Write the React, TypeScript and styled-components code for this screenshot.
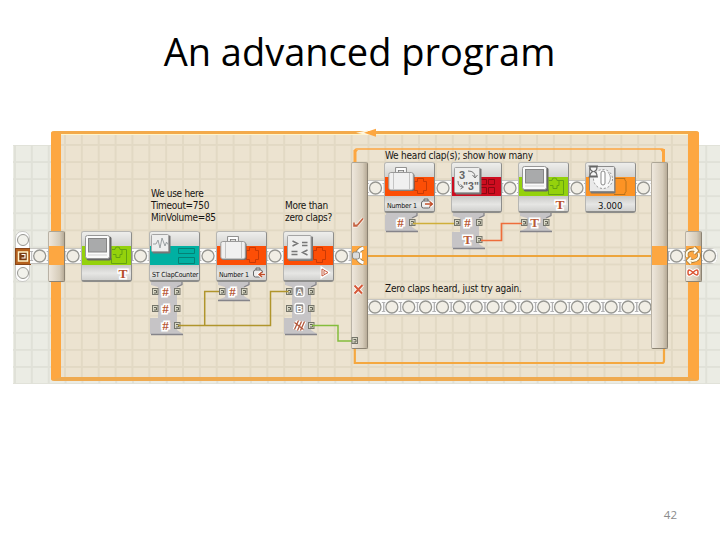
import type { ReactNode } from "react";
import styled, { createGlobalStyle } from "styled-components";

const PITCH = 16.87;
const ORANGE = "#fda741";

const GREEN = "#94d20c";
const RED_ORANGE = "#fc4e06";

type GlyphName = "#" | "T" | "A" | "B" | "%";

interface HubRow {
  glyph: GlyphName;
  input?: boolean;
}

function Beam({ width, circles = [width / 2], end }: { width: number; circles?: number[]; end?: boolean }) {
  return (
    <BeamStrip $width={width} $end={end}>
      <svg width={width} height="16">
        {circles.map((cx) => (
          <g key={cx} fill="none">
            <path
              d={`M${cx - 10} 3.5h3.4M${cx - 10} 12.5h3.4M${cx - 8} 3v9.5M${cx + 7} 3.5h3M${cx + 7} 12.5h3M${cx + 8.6} 3v9.5`}
              stroke="#b2b2b4"
            />
            <circle cx={cx} cy="8" r="6" fill="#f1eee5" stroke="#969691" strokeWidth="1.3" />
          </g>
        ))}
      </svg>
    </BeamStrip>
  );
}

function Glyph({ name, x, y }: { name: GlyphName; x: number; y: number }) {
  if (name === "A" || name === "B") {
    return (
      <g>
        <rect x={x - 4.5} y={y - 5} width="9" height="10" rx="2" fill="#8d8b8b" stroke="#fff" strokeWidth="1.4" />
        <GlyphText x={x} y={y + 3.2} $size={9} $color="#fff" $outline="none" $sans>
          {name}
        </GlyphText>
      </g>
    );
  }
  if (name === "%") {
    const hatch = `M${x - 5} ${y + 4}l4-9M${x - 2} ${y + 5}l4-9M${x + 1} ${y + 5}l4-9M${x - 5} ${y - 3}l9 7`;
    return (
      <g fill="none">
        <path d={hatch} stroke="#fff" strokeWidth="3.6" />
        <path d={hatch} stroke="#b3573b" strokeWidth="1.3" />
      </g>
    );
  }
  return (
    <GlyphText x={x} y={y + 4.3} $size={13} $color="#b85a38" $outline="#fff">
      {name}
    </GlyphText>
  );
}

function Port({ x, y }: { x: number; y: number }) {
  return (
    <g>
      <rect x={x} y={y - 3} width="5.5" height="6" fill="#d9d8c6" stroke="#76766b" />
      <path d={`M${x + 1.5} ${y - 1}h2.5v2.5h-2.5`} fill="none" stroke="#626257" />
    </g>
  );
}

function Hub({ rows }: { rows: HubRow[] }) {
  const height = rows.length * 17 + 3;
  const closed = !rows[rows.length - 1].input;
  const left = closed ? `H0V${height - 18}H8` : `L8 ${height - 5}`;
  return (
    <HubSvg width="36" height={height}>
      <path d={`M1 0H32V3L27 5V${height - 6}L33 ${height - 2}H1${left}V5L1 3Z`} fill="#c6c4c6" />
      <path d={`M1 ${height - 1.5}H33M32 0V2.5L27 5`} fill="none" stroke="#85848a" strokeWidth="1.3" />
      {rows.map((row, i) => (
        <g key={i}>
          {row.input && <Port x={2.5} y={9.5 + i * 17} />}
          <Port x={24.5} y={9.5 + i * 17} />
          <Glyph name={row.glyph} x={15.5} y={9.5 + i * 17} />
        </g>
      ))}
    </HubSvg>
  );
}

interface BlockProps {
  color: string;
  label?: ReactNode;
  badge?: ReactNode;
  mark: ReactNode;
  icon: ReactNode;
  rows?: HubRow[];
}

function Block({ color, label, badge, mark, icon, rows }: BlockProps) {
  return (
    <BlockColumn>
      <BlockBody>
        <BlockCap />
        <BlockBand $color={color}>{mark}</BlockBand>
        <BlockFoot>
          {label}
          {badge}
        </BlockFoot>
        <BlockIcon>{icon}</BlockIcon>
      </BlockBody>
      {rows && <Hub rows={rows} />}
    </BlockColumn>
  );
}

const Screen = () => (
  <svg width="31" height="31">
    <g transform="translate(3 3)">
      <rect x="1.5" y="1.5" width="25" height="24" rx="2" fill="#666" />
      <rect x=".5" y=".5" width="24" height="23" rx="2" fill="#fafafa" stroke="#969696" />
      <rect x="3.5" y="3.5" width="18" height="13.5" fill="#a9aaab" stroke="#858585" />
      <path d="M3 20h19" stroke="#d3d3d3" />
    </g>
  </svg>
);

const Suitcase = () => (
  <svg width="31" height="31">
    <g transform="translate(3 3)">
      <path d="M9 6V3h8v3" fill="none" stroke="#777" strokeWidth="3.5" />
      <path d="M9 6V3h8v3" fill="none" stroke="#fff" strokeWidth="1.8" />
      <rect x="1.5" y="7.5" width="25" height="17.5" rx="2" fill="#6d6d6d" />
      <rect x=".8" y="6.5" width="24.5" height="17.5" rx="2" fill="#f0f0f0" stroke="#9a9a9a" />
      <path d="M5.5 7v17M21.5 7v17" stroke="#c4c4c4" />
    </g>
  </svg>
);

const Plate = ({ x, y, size, children }: { x: number; y: number; size: number; children: ReactNode }) => (
  <svg width="36" height="36">
    <g transform={`translate(${x} ${y})`}>
      <rect x="1.5" y="1.5" width={size} height={size} rx="1" fill="#777" />
      <rect x=".5" y=".5" width={size - 1} height={size - 1} rx="1" fill="#eeeeed" stroke="#a4a4a4" />
      {children}
    </g>
  </svg>
);

const Wave = () => (
  <Plate x={1} y={2} size={18}>
    <path d="M2 10h3l2-4 2 8 2-10 3 8 1.5-4 1 2h1" fill="none" stroke="#9aa0a2" />
  </Plate>
);

const Compare = () => (
  <Plate x={3} y={3} size={24.5}>
    <path
      d="M5.5 6l5 2.5-5 2.5M15 7.5h5.5M15 10.5h5.5M4.500 16.5h6M4.500 19.5h6M20.500 15L15.500 17.5l5 2.5"
      fill="none"
      stroke="#777"
      strokeWidth="1.4"
    />
  </Plate>
);

const Convert = () => (
  <Plate x={2} y={4} size={26}>
    <GlyphText x={8} y={12} $size={11} $color="#666" $outline="none" $sans>3</GlyphText>
    <GlyphText x={17} y={23} $size={10.5} $color="#666" $outline="none" $sans>"3"</GlyphText>
    <path d="M14 4q7 0 7 6m-2.5-2l2.5 3 2.5-3M4 14q0 6 5 6m-2.5-2.5l3 2.5-3 2" fill="none" stroke="#777" />
  </Plate>
);

const Clock = () => (
  <svg width="34" height="34">
    <rect x="4.5" y="4.5" width="25" height="26" rx="1" fill="#777" />
    <rect x="3.5" y="3.5" width="25" height="25" rx="1" fill="#e9e9e9" stroke="#8b8b8b" />
    <circle cx="17" cy="16" r="9.5" fill="#f8f8f8" stroke="#909090" strokeDasharray="2 2" />
    <rect x="15" y="8" width="4" height="14" rx="2" fill="#fff" stroke="#888" />
    <path d="M22 9q5 6 0 12" fill="none" stroke="#aaa" />
    <path
      d="M2.5 3h9.5M2.5 14h9.5M4 4q0 4 3.3 4.5Q4 9.5 4 13h7q0-3.5-3.3-4.5Q11 8 11 4Z"
      fill="#f5f5f5"
      stroke="#666"
      strokeWidth="1.2"
    />
  </svg>
);

const DisplayMark = () => (
  <svg width="18" height="19">
    <path
      d="M1.5 17.5V12.5M1.5 17.5h15v-14h-5M2 3.5h3q0-3 2.5-2.5q2.5-.5 2.5 2.5h2v5h-2v3h-4v-3H3"
      fill="none"
      stroke="#64a312"
    />
  </svg>
);

const DataMark = () => (
  <svg width="18" height="19">
    <path d="M1.5 4.5h3v-3h6v3h3v9h-3v3h-6v-3h-3Z" fill="none" stroke="#c93a05" />
  </svg>
);

const TealMark = () => (
  <svg width="18" height="19">
    <path d="M.5 2.5h16v5H.5ZM.5 11.5h16v6H.5Z" fill="none" stroke="#058175" />
  </svg>
);

const RedMark = () => (
  <svg width="18" height="19">
    <path d="M.5 2.5h6v5h-6ZM8.5 2.5h6v5h-6ZM.5 10.5h6v6h-6ZM8.5 10.5h6v6h-6Z" fill="none" stroke="#8d0711" />
  </svg>
);

const WaitMark = () => (
  <svg width="18" height="19">
    <path d="M0 1.5h11q-1 1 1 3v10q-2 2-1 3H0" fill="none" stroke="#b9721b" />
  </svg>
);

const TextBadge = () => (
  <Badge width="15" height="14">
    <GlyphText x={7} y={11.5} $size={13.5} $color="#b84f2d" $outline="#fff">T</GlyphText>
  </Badge>
);

const CaseBadge = ({ write }: { write?: boolean }) => {
  const arrow = write ? "M13 8.5H7m3-2.5L7 8.5l3 2.5" : "M5 7h7M9.5 4.5L12.5 7 9.5 9.5";
  return (
    <Badge width="14" height="14">
      <rect x="1.5" y="4" width="9" height="7" rx="2" fill="#eee" stroke="#666" />
      <path d="M4 4V2h4v2" fill="none" stroke="#666" />
      <path d={arrow} fill="none" stroke="#fff" strokeWidth="3" />
      <path d={arrow} fill="none" stroke="#c04d28" strokeWidth="1.3" />
    </Badge>
  );
};

const GreaterBadge = () => (
  <Badge width="15" height="14">
    <path d="M4 2.5l6 4-6 4z" fill="#fff" stroke="#fff" strokeWidth="3" />
    <path d="M4 3l6 3.5L4 10zM6 5v3" fill="none" stroke="#c5583b" />
  </Badge>
);

function LoopOverlay() {
  const check = "M354 92.5v3.5h3.500M354.5 95.5l3-.5 5.5-6.5";
  const cross = "M354.5 155.5l7.5 8M362.5 155l-8 8.5";
  const fork = "M357.5 125.500q0-5.500 6-7.500M357.5 125.500q0 5.500 6 7.500";
  const cycle = "M687 127q-2-7 6-7.5l3 1M698.5 123q2 7-6 8l-3-1M694 117.5l3 3-3 3M691 127.5l-3 3 3 3";
  const infinity = "M693 142.5q-5-5-5 0t5 0q5-5 5 0t-5 0";
  return (
    <Wires width="720" height="254">
      <g fill="none" strokeWidth="1.5">
        <path d="M178 195.5h92.5v-34h18M204.7 195.5v-34H219" stroke="#b0952c" />
        <path d="M312 195.5h26v15.500h15" stroke="#84bd3c" />
        <path d="M413 93.5h41" stroke="#cfaf3a" />
        <path d="M481 110.5h20.500V93.5H522" stroke="#ee6d3b" strokeWidth="1.7" />
      </g>
      <g fill="none">
        <path d={check} stroke="#f6ece4" strokeWidth="3.4" />
        <path d={check} stroke="#c4603f" strokeWidth="1.6" />
        <path d={cross} stroke="#fff" strokeWidth="3.8" />
        <path d={cross} stroke="#d65a3a" strokeWidth="2" />
        <path d={fork} stroke="#8d7a55" strokeWidth="4.4" />
        <path d={fork} stroke="#fff" strokeWidth="3" />
        <rect x="352.5" y="122" width="7" height="7" rx="2" fill="#dcdcdc" stroke="#8c8c86" />
        <path d="M361 122.5v6" stroke="#fff" strokeWidth="2" />
        <path d={cycle} stroke="#8c6a36" strokeWidth="3.4" />
        <path d={cycle} stroke="#fffbe9" strokeWidth="2.1" />
        <path d={infinity} stroke="#fff" strokeWidth="3.5" />
        <path d={infinity} stroke="#dc5634" strokeWidth="1.5" />
      </g>
      <Port x={352} y={210.5} />
    </Wires>
  );
}

function App() {
  return (
    <Slide>
      <GlobalStyle />
      <Title>An advanced program</Title>
      <Canvas>
        <Sheet />
        <LoopFrame />
        <Wires width="720" height="254">
          <path d="M354.7 32V21q0-2 2-2H662q2 0 2 2v11" fill="none" stroke={ORANGE} strokeWidth="1.3" />
          <path d="M353.5 32V20H358L356.5 22V32ZM660 19h5v13h-3V22Z" fill={ORANGE} />
          <path d="M354.8 219v14H662q2 0 2-2v-13" fill="none" stroke="#f5a840" strokeWidth="2.2" />
          <path d="M366 126h286" stroke="#eda53c" strokeWidth="2" />
          <path d="M356 2.8l12-2.5v5z" fill="#fff6de" />
          <path d="M364 2.8l12-4v8z" fill={ORANGE} />
        </Wires>

        <Program>
          <Track>
            <Start>
              <StartHole />
              <StartTile>
                <svg width="14" height="15">
                  <rect x="2.5" y="3" width="9" height="9" fill="#7a3c12" stroke="#fff3c9" strokeWidth="1.5" />
                  <path d="M5.5 5.500h3.500v3.500h-2M5.5 9h1.5" fill="none" stroke="#fff" strokeWidth="1.2" />
                </svg>
              </StartTile>
              <StartHole />
            </Start>
            <Beam width={18} circles={[9.7]} />
            <Bar $height={51} $before={15} />
            <Beam width={16} />
            <Block color={GREEN} mark={<DisplayMark />} badge={<TextBadge />} icon={<Screen />} />
            <Beam width={17} />
            <Step>
              <StepNote>
                We use here
                <br />
                Timeout=750
                <br />
                MinVolume=85
              </StepNote>
              <Block
                color="#00b0a2"
                label={<BlockLabel>ST ClapCounter</BlockLabel>}
                mark={<TealMark />}
                icon={<Wave />}
                rows={[{ glyph: "#", input: true }, { glyph: "#", input: true }, { glyph: "#" }]}
              />
            </Step>
            <Beam width={16} />
            <Block
              color={RED_ORANGE}
              label={<BlockLabel>Number 1</BlockLabel>}
              mark={<DataMark />}
              badge={<CaseBadge write />}
              icon={<Suitcase />}
              rows={[{ glyph: "#", input: true }]}
            />
            <Beam width={16} />
            <Step>
              <StepNote>
                More than
                <br />
                zero claps?
              </StepNote>
              <Block
                color={RED_ORANGE}
                mark={<DataMark />}
                badge={<GreaterBadge />}
                icon={<Compare />}
                rows={[{ glyph: "A", input: true }, { glyph: "B", input: true }, { glyph: "%" }]}
              />
            </Step>
            <Beam width={17} circles={[7.5]} />
          </Track>

          <Bar $height={187} $before={84} />
          <Cases>
            <CaseNote>We heard clap(s); show how many</CaseNote>
            <CaseRow>
              <Beam width={16} circles={[7.5]} />
              <Block
                color={RED_ORANGE}
                label={<BlockLabel>Number 1</BlockLabel>}
                mark={<DataMark />}
                badge={<CaseBadge />}
                icon={<Suitcase />}
                rows={[{ glyph: "#" }]}
              />
              <Beam width={16} />
              <Block
                color="#ce0d20"
                mark={<RedMark />}
                icon={<Convert />}
                rows={[{ glyph: "#", input: true }, { glyph: "T" }]}
              />
              <Beam width={16} />
              <Block
                color={GREEN}
                mark={<DisplayMark />}
                badge={<TextBadge />}
                icon={<Screen />}
                rows={[{ glyph: "T", input: true }]}
              />
              <Beam width={16} />
              <Block color="#fd9324" label={<Seconds>3.000</Seconds>} mark={<WaitMark />} icon={<Clock />} />
              <Beam width={15} />
            </CaseRow>
            <CaseNote>Zero claps heard, just try again.</CaseNote>
            <Beam width={283} circles={Array.from({ length: 17 }, (_, i) => 7 + i * PITCH)} />
          </Cases>
          <Bar $height={187} $before={84} />

          <Track>
            <Beam width={17} />
            <Bar $height={51} $before={15} />
            <Beam width={16} circles={[7.5]} end />
          </Track>
        </Program>
        <LoopOverlay />
      </Canvas>
      <PageNumber>42</PageNumber>
    </Slide>
  );
}

const GlobalStyle = createGlobalStyle`
  body {
    margin: 0;
    background: #fff;
  }

  svg {
    display: block;
  }
`;

const Slide = styled.main`
  display: flex;
  flex-direction: column;
  width: 720px;
  height: 540px;
  overflow: hidden;
  background: #fff;
  font-family: "Open Sans", sans-serif;
`;

const Title = styled.h1`
  flex: none;
  height: 130px;
  margin: 0;
  padding: 25px 1px 0 0;
  box-sizing: border-box;
  color: #000;
  font-size: 38px;
  font-weight: 400;
  line-height: 52px;
  text-align: center;
  white-space: nowrap;
`;

const Canvas = styled.section`
  position: relative;
  flex: none;
  height: 254px;
`;

const Sheet = styled.div`
  position: absolute;
  inset: 15px 0 0 13px;
  background-color: #ebece4;
  background-image: linear-gradient(#e0e1d8 2px, transparent 2px),
    linear-gradient(90deg, #e0e1d8 2px, transparent 2px);
  background-size: ${PITCH}px 17.08px;
  background-position: 1px -1px;
`;

const LoopFrame = styled.div`
  position: absolute;
  inset: 1px 21px 3px 51px;
  box-sizing: border-box;
  border: solid ${ORANGE};
  border-width: 3px 11px 4px 10px;
  border-top-color: #f3aa4b;
  border-bottom-color: #efaa50;
  border-radius: 3px;
  background-color: #ece3d0;
  background-image: linear-gradient(#e2d9c4 2px, transparent 2px),
    linear-gradient(90deg, #e2d9c4 2px, transparent 2px);
  background-size: ${PITCH}px 17.08px;
  background-position: 3px 10px;
  box-shadow: inset 0 1px #fff5ca;
`;

const Wires = styled.svg`
  position: absolute;
  inset: 0;
  overflow: visible;
`;

const Program = styled.div`
  position: relative;
  display: flex;
  align-items: flex-start;
  padding: 32px 0 0 15px;
`;

const BeamStrip = styled.div<{ $width: number; $end?: boolean }>`
  flex: none;
  width: ${({ $width }) => $width}px;
  height: 16px;
  margin-top: 17px;
  overflow: hidden;
  border-radius: ${({ $end }) => ($end ? "0 8px 8px 0" : "0")};
  background: linear-gradient(#c6c5c1 1px, #fcfcfb 1px 15px, #c0bfbb 15px);
`;

const Track = styled.div`
  display: flex;
  align-items: flex-start;
  padding-top: 69px;
`;

const Cases = styled.div`
  display: flex;
  flex-direction: column;
  width: 283px;
  margin-top: -12px;

  > ${BeamStrip} {
    margin-top: 4px;
  }
`;

const CaseRow = styled.div`
  display: flex;
  align-items: flex-start;
  height: 121px;

  > ${BeamStrip} {
    margin-top: 18px;
  }
`;

const Step = styled.div`
  display: flex;
  flex-direction: column;
  justify-content: flex-end;
  width: 51px;
  margin-top: -69px;
`;

const Note = styled.p`
  margin: 0;
  color: #171512;
  font-family: "DejaVu Sans Condensed", "DejaVu Sans", sans-serif;
  font-size: 10px;
  letter-spacing: -0.22px;
  line-height: 12px;
  white-space: nowrap;
`;

const StepNote = styled(Note)`
  display: flow-root;
  height: 69px;
  padding: 0 0 7px 2px;
  box-sizing: border-box;
  align-content: end;
  letter-spacing: -0.3px;
`;

const CaseNote = styled(Note)`
  flex: none;
  height: 12px;
  padding-left: 17px;
`;

const Start = styled.div`
  display: flex;
  flex-direction: column;
  align-items: center;
  justify-content: space-between;
  width: 15px;
  height: 51px;
  padding: 2px 0;
  box-sizing: border-box;
  border: 1px solid #c9c9c5;
  border-radius: 7px;
  background: #fdfdfd;
`;

const StartHole = styled.div`
  width: 12px;
  height: 12px;
  box-sizing: border-box;
  border: 1px solid #969691;
  border-radius: 50%;
  background: #f2f2ec;
`;

const StartTile = styled.div`
  width: 14px;
  height: 15px;
  background: #b5611d;
  box-shadow: 0 0 0 1px #87451a;
`;

const Bar = styled.div<{ $height: number; $before: number }>`
  flex: none;
  width: 17px;
  height: ${({ $height }) => $height}px;
  box-sizing: border-box;
  border: 1px solid #8c8373;
  border-left-color: #b9b2a5;
  border-top-color: #aca595;
  border-radius: 2px;
  background: linear-gradient(
      transparent ${({ $before }) => $before - 1}px,
      ${ORANGE} ${({ $before }) => $before - 1}px ${({ $before }) => $before + 18}px,
      transparent ${({ $before }) => $before + 18}px
    ),
    linear-gradient(90deg, #eee7dc, #d6ccba 70%, #b7ab97);
`;

const BlockColumn = styled.div`
  display: flex;
  flex: none;
  flex-direction: column;
  width: 51px;
`;

const BlockBody = styled.div`
  position: relative;
  display: flex;
  flex-direction: column;
  height: 51px;
  box-sizing: border-box;
  overflow: hidden;
  border: 1px solid #8d8d8b;
  border-top-color: #b6b6b3;
  border-left-color: #b6b6b3;
  border-bottom-width: 2px;
  border-radius: 3px;
  background: #ddd;
`;

const BlockCap = styled.div`
  flex: none;
  height: 14px;
  background: linear-gradient(#eeeeec, #d2d2cf);
`;

const BlockBand = styled.div<{ $color: string }>`
  display: flex;
  flex: none;
  justify-content: flex-end;
  height: 19px;
  padding-right: 3px;
  background: ${({ $color }) => $color};
`;

const BlockFoot = styled.div`
  display: flex;
  flex: 1;
  align-items: center;
  background: linear-gradient(#c9c9c7, #e6e6e4 55%, #d1d1cf);
`;

const BlockLabel = styled.span`
  margin: 4px 0 0 2px;
  color: #111;
  font-family: "DejaVu Sans Condensed", "DejaVu Sans", sans-serif;
  font-size: 7px;
  line-height: 8px;
  letter-spacing: -0.2px;
  white-space: nowrap;
`;

const Seconds = styled(BlockLabel)`
  margin: 4px 0 0 12px;
  font-size: 9.5px;
  letter-spacing: 0;
`;

const BlockIcon = styled.div`
  position: absolute;
  inset: 0 auto auto 0;
`;

const Badge = styled.svg`
  flex: none;
  margin-left: auto;
`;

const HubSvg = styled.svg`
  margin-left: 1px;
`;

const GlyphText = styled.text<{ $size: number; $color: string; $outline: string; $sans?: boolean }>`
  fill: ${({ $color }) => $color};
  font-family: ${({ $sans }) => ($sans ? '"Liberation Sans", sans-serif' : '"Liberation Serif", serif')};
  font-size: ${({ $size }) => $size}px;
  font-weight: 700;
  paint-order: stroke;
  stroke: ${({ $outline }) => $outline};
  stroke-width: 3px;
  text-anchor: middle;
`;

const PageNumber = styled.footer`
  margin: auto 43px 17px auto;
  color: #8b8b8b;
  font-size: 11.5px;
  line-height: 16px;
`;

export default App;
